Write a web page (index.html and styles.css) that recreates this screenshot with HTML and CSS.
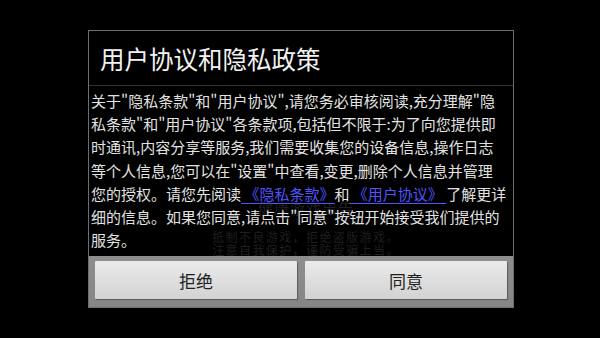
FILE: index.html
```html
<!DOCTYPE html>
<html lang="zh-CN">
<head>
<meta charset="utf-8">
<title>用户协议和隐私政策</title>
<link rel="stylesheet" href="styles.css">
</head>
<body>
<div class="advice">
  <div class="advice-title">健康游戏忠告</div>
  <div class="advice-line">抵制不良游戏，拒绝盗版游戏。</div>
  <div class="advice-line">注意自我保护，谨防受骗上当。</div>
  <div class="advice-line">适度游戏益脑，沉迷游戏伤身。</div>
  <div class="advice-line">合理安排时间，享受健康生活。</div>
</div>
<div class="screen">
  <div class="dialog">
    <div class="dialog-title">用户协议和隐私政策</div>
    <div class="dialog-body">关于"隐私条款"和"用户协议",请您务必审核阅读,充分理解"隐<br>私条款"和"用户协议"各条款项,包括但不限于:为了向您提供即<br>时通讯,内容分享等服务,我们需要收集您的设备信息,操作日志<br>等个人信息,您可以在"设置"中查看,变更,删除个人信息并管理<br>您的授权。请您先阅读<a class="link" href="#"> 《隐私条款》</a>和<a class="link" href="#"> 《用户协议》 </a>了解更详<br>细的信息。如果您同意,请点击"同意"按钮开始接受我们提供的<br>服务。</div>
    <div class="dialog-buttons">
      <button class="btn">拒绝</button>
      <button class="btn">同意</button>
    </div>
  </div>
</div>
</body>
</html>
```
FILE: styles.css
```css
html, body {
  margin: 0;
  padding: 0;
  background: #000;
  width: 600px;
  height: 338px;
  overflow: hidden;
  font-family: "Noto Sans CJK SC", "Noto Sans", sans-serif;
}

.advice {
  position: absolute;
  top: 198px;
  left: 12px;
  right: 0;
  text-align: center;
  color: #1f1f1f;
  z-index: 0;
}

.advice-title {
  font-size: 15px;
  line-height: 20px;
  margin-bottom: 12px;
  letter-spacing: 1px;
}

.advice-line {
  font-size: 12px;
  line-height: 13px;
  letter-spacing: 1.4px;
}

.screen {
  position: relative;
  z-index: 1;
  width: 600px;
  height: 338px;
  display: flex;
  justify-content: center;
  align-items: flex-start;
  padding-top: 30px;
  box-sizing: border-box;
}

.dialog {
  width: 426px;
  height: 278px;
  margin-left: 2px;
  box-sizing: border-box;
  border: 1px solid #6e6e6e;
  display: flex;
  flex-direction: column;
}

.dialog-title {
  height: 54px;
  flex: none;
  display: flex;
  align-items: center;
  padding-left: 11px;
  font-size: 24.5px;
  color: #f2f2f2;
  border-bottom: 1px solid #333;
}

.dialog-body {
  flex: 1;
  padding: 3px 0 0 2px;
  font-size: 15px;
  line-height: 23.2px;
  color: #e2e2e2;
  white-space: nowrap;
  overflow: hidden;
}

.link {
  color: #5252ff;
  text-decoration: underline;
  text-underline-offset: 3px;
}

.dialog-buttons {
  flex: none;
  height: 51px;
  box-sizing: border-box;
  padding: 5px 6px 8px 6px;
  background: linear-gradient(#8e8e8e, #858585);
  display: flex;
  gap: 8px;
}

.btn {
  flex: 1;
  height: 38px;
  border: none;
  border-radius: 1px;
  background: linear-gradient(#ebebeb, #d2d2d2);
  box-shadow: 1px 1px 1px rgba(0,0,0,0.35);
  font-family: "Noto Sans CJK SC", sans-serif;
  font-size: 17px;
  color: #1e1e1e;
  padding: 0;
}
```
